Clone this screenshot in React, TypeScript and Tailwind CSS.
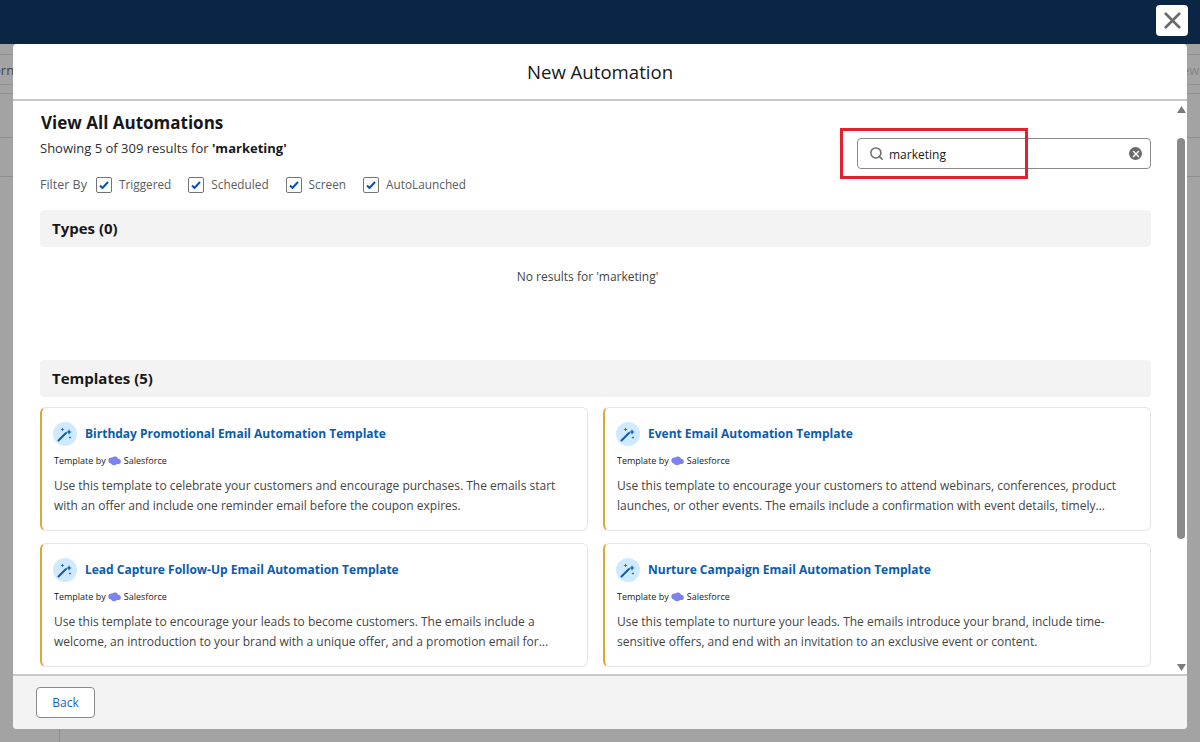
import { Search, X } from 'lucide-react';

const filters = ['Triggered', 'Scheduled', 'Screen', 'AutoLaunched'];

const templates = [
  {
    title: 'Birthday Promotional Email Automation Template',
    lines: [
      'Use this template to celebrate your customers and encourage purchases. The emails start',
      'with an offer and include one reminder email before the coupon expires.',
    ],
  },
  {
    title: 'Event Email Automation Template',
    lines: [
      'Use this template to encourage your customers to attend webinars, conferences, product',
      'launches, or other events. The emails include a confirmation with event details, timely...',
    ],
  },
  {
    title: 'Lead Capture Follow-Up Email Automation Template',
    lines: [
      'Use this template to encourage your leads to become customers. The emails include a',
      'welcome, an introduction to your brand with a unique offer, and a promotion email for...',
    ],
  },
  {
    title: 'Nurture Campaign Email Automation Template',
    lines: [
      'Use this template to nurture your leads. The emails introduce your brand, include time-',
      'sensitive offers, and end with an invitation to an exclusive event or content.',
    ],
  },
];

function Cloud() {
  return (
    <svg width="13" height="10" viewBox="0 0 15 11" className="ml-[2px] mr-[3px]">
      <ellipse cx="4" cy="5" rx="3.6" ry="3.4" fill="#7b83f0" />
      <ellipse cx="8" cy="4" rx="3.6" ry="3.6" fill="#7b83f0" />
      <ellipse cx="11.5" cy="6" rx="3.3" ry="3" fill="#7b83f0" />
      <ellipse cx="7" cy="7.5" rx="3.6" ry="2.8" fill="#7b83f0" />
    </svg>
  );
}

function WandIcon() {
  return (
    <svg width="16" height="16" viewBox="0 0 16 16" fill="#0b5cab">
      <path d="M1.5 14.500 9 7" stroke="#0b5cab" strokeWidth="2" strokeLinecap="round" />
      <path d="M12 3l.8 2.200L15 6l-2.200.8L12 9l-.8-2.200L9 6l2.200-.8z" />
      <path d="M5.500 1.500l.5 1.500 1.500.5-1.500.5-.5 1.500-.5-1.500-1.500-.5 1.500-.5z" />
      <path d="M13 10l.4 1.100 1.100.4-1.100.4-.4 1.100-.4-1.100-1.100-.4 1.100-.4z" />
    </svg>
  );
}

function TemplateCard({ title, lines }: { title: string; lines: string[] }) {
  return (
    <div className="h-[124px] rounded-[6px] border border-[#e5e5e5] border-l-2 border-l-[#dda63a] bg-white pl-[12px] pt-[14px]">
      <div className="flex items-center gap-[8px]">
        <div className="-ml-[1px] flex h-[24px] w-[24px] items-center justify-center rounded-full bg-[#cfe9fe]">
          <WandIcon />
        </div>
        <span className="text-[12px] font-bold leading-[24px] text-[#0b5cab]">{title}</span>
      </div>
      <div className="mt-[8px] flex h-[14px] items-center text-[9px] text-[#181818]">
        Template by
        <Cloud />
        Salesforce
      </div>
      <div className="mt-[8px] text-[12px] leading-[20px] text-[#444444]">
        {lines.map((line) => (
          <div key={line} className="whitespace-nowrap">
            {line}
          </div>
        ))}
      </div>
    </div>
  );
}

function SectionBar({ label }: { label: string }) {
  return (
    <div className="flex h-[37px] items-center rounded-[4px] bg-[#f3f3f3] pl-[12px] text-[15px] font-bold text-[#181818]">
      {label}
    </div>
  );
}

function PageStrip({ text, tone, shift }: { text: string; tone: string; shift: string }) {
  return (
    <div className="w-[13px] overflow-hidden">
      <div className={`mt-[10px] h-[31px] border-y border-[#8e8e8e] text-[13px] leading-[30px] ${tone}`}>
        <span className={`inline-block ${shift}`}>{text}</span>
      </div>
      <div className="mt-[8px] h-[45px] border-y border-[#8e8e8e]" />
      <div className="h-[39px] border-b border-[#8e8e8e]" />
    </div>
  );
}

export default function App() {
  return (
    <div
      className="relative h-[742px] w-[1200px] overflow-hidden bg-[#a3a3a3]"
      style={{ fontFamily: '"Open Sans", "Noto Sans", sans-serif' }}
    >
      {/* Page behind the overlay */}
      <div className="h-[44px] bg-[#0b2545]" />
      <div className="flex h-[685px] justify-between">
        <PageStrip text="orn" tone="text-[#444444]" shift="-ml-[7px]" />
        <PageStrip text="ew" tone="text-[#858585]" shift="ml-[-5px]" />
      </div>
      <div className="ml-[59px] h-[13px] border-l border-[#8e8e8e]" />

      {/* Close button */}
      <button className="absolute left-[1156px] top-[5px] flex h-[31px] w-[32px] items-center justify-center rounded-[4px] bg-white">
        <X size={27} strokeWidth={2.4} className="text-[#6b6b6b]" />
      </button>

      {/* Modal */}
      <div className="absolute left-[13px] top-[44px] flex h-[685px] w-[1174px] flex-col overflow-hidden rounded-[4px] bg-white">
        <div className="flex h-[57px] shrink-0 items-center justify-center border-b-2 border-[#c9c9c9] pt-[1px] text-[18.6px] text-[#181818]">
          New Automation
        </div>

        <div className="flex min-h-0 flex-1">
          <div className="min-w-0 flex-1 overflow-hidden pl-[27px] pr-[22px]">
            <div className="flex justify-between">
              <div>
                <div className="ml-[1px] mt-[10px] text-[17px] font-bold leading-[24px] text-[#181818]">
                  View All Automations
                </div>
                <div className="mt-[3px] text-[13px] leading-[20px] text-[#2e2e2e]">
                  Showing 5 of 309 results for <span className="font-bold text-[#181818]">'marketing'</span>
                </div>
                <div className="mt-[17px] flex h-[20px] items-center text-[11.8px] text-[#5c5c5c]">
                  <span className="mr-[9px] text-[12.5px]">Filter By</span>
                  {filters.map((filter) => (
                    <label key={filter} className="mr-[17px] flex items-center gap-[7px]">
                      <span className="flex h-[16px] w-[16px] items-center justify-center rounded-[2px] border border-[#747474] bg-white">
                        <svg width="10" height="8" viewBox="0 0 10 8" fill="none">
                          <path d="M1 4.500 3.500 7 9 1" stroke="#0b50b8" strokeWidth="2" />
                        </svg>
                      </span>
                      {filter}
                    </label>
                  ))}
                </div>
              </div>
              <div className="mt-[37px] flex h-[31px] w-[294px] items-center rounded-[4px] border border-[#8a8a8a] bg-white pl-[11px] pr-[8px] text-[12px] text-[#181818]">
                <Search size={15} strokeWidth={2.4} className="text-[#6b6b6b]" />
                <span className="ml-[5px] flex-1 pt-[2px]">marketing</span>
                <span className="flex h-[13px] w-[13px] items-center justify-center rounded-full bg-[#6b6b6b]">
                  <X size={10} strokeWidth={3.500} className="text-white" />
                </span>
              </div>
            </div>

            <div className="mt-[15px]">
              <SectionBar label="Types (0)" />
            </div>
            <div className="h-[113px] pr-[16px] pt-[21px] text-center text-[12px] leading-[18px] text-[#444444]">
              No results for 'marketing'
            </div>
            <SectionBar label="Templates (5)" />
            <div className="mt-[10px] grid grid-cols-2 gap-x-[15px] gap-y-[12px]">
              {templates.map((t) => (
                <TemplateCard key={t.title} title={t.title} lines={t.lines} />
              ))}
            </div>
          </div>

          {/* Scrollbar */}
          <div className="flex w-[14px] shrink-0 flex-col items-center pl-[2px]">
            <svg width="9" height="7" viewBox="0 0 9 7" className="mt-[5px]">
              <path d="M4.500 0 9 7H0z" fill="#7b7b7b" />
            </svg>
            <div className="mt-[25px] h-[401px] w-[8px] rounded-full bg-[#8a8a8a]" />
            <div className="flex-1" />
            <svg width="9" height="7" viewBox="0 0 9 7" className="mb-[3px]">
              <path d="M0 0h9L4.500 7z" fill="#7b7b7b" />
            </svg>
          </div>
        </div>

        <div className="flex h-[55px] shrink-0 items-center border-t-2 border-[#c9c9c9] bg-[#f3f3f3] pl-[23px]">
          <button className="h-[31px] w-[59px] rounded-[4px] border border-[#8a8a8a] bg-white pt-[1px] text-[12px] text-[#1b62bd]">
            Back
          </button>
        </div>
      </div>

      {/* Red annotation box */}
      <div className="absolute left-[840px] top-[128px] h-[51px] w-[188px] border-[3px] border-[#e3202e]" />
    </div>
  );
}
